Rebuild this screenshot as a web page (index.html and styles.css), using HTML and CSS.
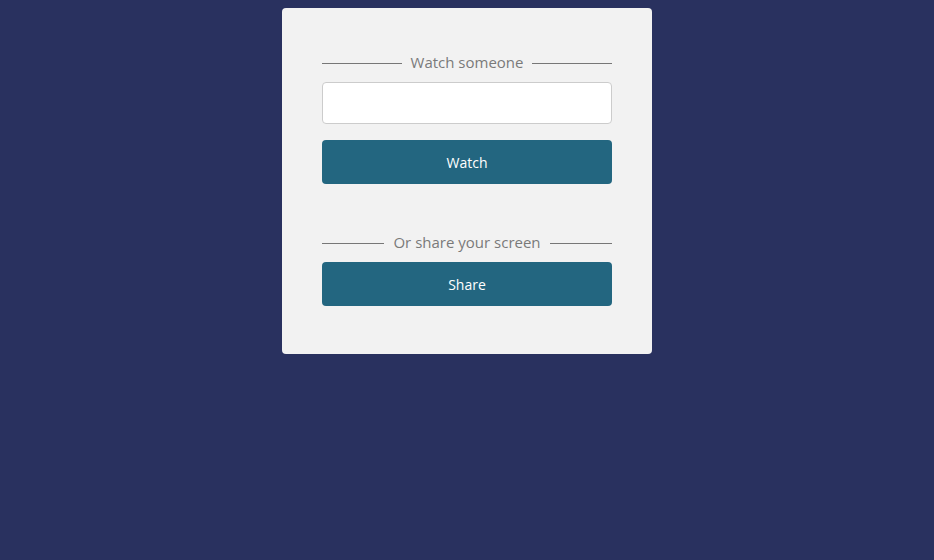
FILE: index.html
```html
<!DOCTYPE html>
<html lang="en">
<head>
<meta charset="utf-8">
<title>Watch</title>
<link rel="stylesheet" href="styles.css">
</head>
<body>
<main class="card">
  <div class="divider"><span class="divider-text">Watch someone</span></div>
  <input class="input" type="text" aria-label="Watch someone">
  <button class="btn btn-watch">Watch</button>
  <div class="divider divider-share"><span class="divider-text">Or share your screen</span></div>
  <button class="btn">Share</button>
</main>
</body>
</html>
```
FILE: styles.css
```css
html, body {
  margin: 0;
  padding: 0;
}
body {
  background: #29315f;
  font-family: "Open Sans", "DejaVu Sans", sans-serif;
  padding-top: 8px;
  min-height: 552px;
}
.card {
  box-sizing: border-box;
  width: 370px;
  margin: 0 auto;
  background: #f2f2f2;
  border-radius: 4px;
  padding: 44px 40px 48px;
  display: flex;
  flex-direction: column;
}
.divider {
  display: flex;
  align-items: center;
  gap: 9px;
  height: 20px;
  color: #7a7a7a;
  font-size: 15px;
  margin-bottom: 10px;
}
.divider::before,
.divider::after {
  content: "";
  flex: 1;
  height: 1px;
  margin-top: 2px;
  background: #777;
}
.divider-share {
  margin-top: 48px;
}
.input {
  box-sizing: border-box;
  height: 42px;
  width: 100%;
  border: 1px solid #cccccc;
  border-radius: 4px;
  background: #fff;
  margin: 0;
}
.btn {
  box-sizing: border-box;
  height: 44px;
  width: 100%;
  border: none;
  border-radius: 4px;
  background: #236680;
  color: #fff;
  font-family: "Open Sans", "DejaVu Sans", sans-serif;
  font-size: 14px;
  padding: 0;
}
.btn-watch {
  margin-top: 16px;
}
```
